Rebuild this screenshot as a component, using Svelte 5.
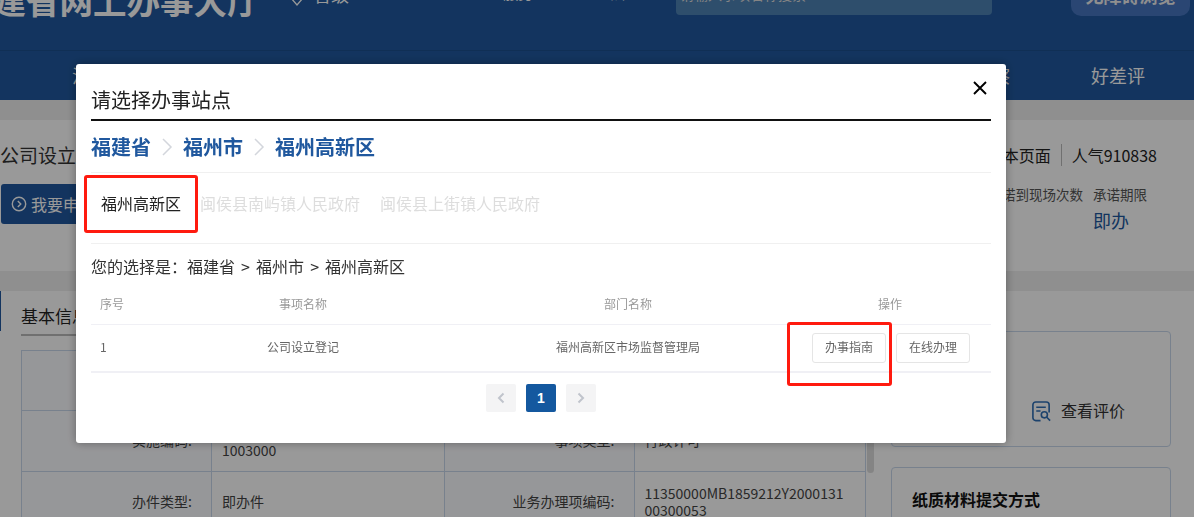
<script>
	const tabs = ["福州高新区", "闽侯县南屿镇人民政府", "闽侯县上街镇人民政府"];
	const crumbs = ["福建省", "福州市", "福州高新区"];
	const navItems = ["法律法规", "办事指南", "结果公示", "咨询投诉", "便民服务", "监督考察"];
</script>

<div class="page">
	<header class="top">
		<h1>福建省网上办事大厅</h1>
		<div class="region">
			<svg width="14" height="14" viewBox="0 0 14 14"><path d="M1 6l6 7 6-7" fill="none" stroke="currentColor" stroke-width="1.3" /></svg>
			<span>省级</span>
		</div>
		<span class="link first">个人 服务</span>
		<span class="link second">法人</span>
		<div class="search"><span>请输入事项名称搜索</span></div>
		<div class="access"><span>无障碍浏览</span></div>
	</header>

	<nav class="nav">
		<div class="nav-main">
			{#each navItems as item}
				<span>{item}</span>
			{/each}
		</div>
		<span>好差评</span>
	</nav>

	<div class="band"></div>

	<section class="summary">
		<div class="left">
			<div class="name">公司设立登记</div>
			<div class="apply">
				<svg width="16" height="16" viewBox="0 0 16 16"><circle cx="8" cy="8" r="6.7" fill="none" stroke="currentColor" stroke-width="1.4" /><path d="M6.8 5l3 3-3 3" fill="none" stroke="currentColor" stroke-width="1.4" /></svg>
				我要申请
			</div>
		</div>
		<div class="right">
			<div class="stats">
				<span>收藏本页面</span>
				<i></i>
				<span>人气910838</span>
			</div>
			<div class="limits">
				<div><small>承诺到现场次数</small></div>
				<div>
					<small>承诺期限</small>
					<b>即办</b>
				</div>
			</div>
		</div>
	</section>

	<div class="band"></div>

	<section class="detail">
		<div class="main">
			<div class="main-title"><span>基本信息</span></div>
			<div class="grid">
				<div class="label"></div>
				<div class="value"></div>
				<div class="label"></div>
				<div class="value"></div>

				<div class="label">实施编码:</div>
				<div class="value wide">11350000MB1859212Y200013<br />1003000</div>
				<div class="label">事项类型:</div>
				<div class="value wide">行政许可</div>

				<div class="label">办件类型:</div>
				<div class="value">即办件</div>
				<div class="label">业务办理项编码:</div>
				<div class="value">11350000MB1859212Y2000131<br />00300053</div>
			</div>
		</div>
		<div class="scrollbar"></div>
		<aside>
			<div class="card review">
				<svg width="21" height="21" viewBox="0 0 22 22" fill="none" stroke="#2f6fb5" stroke-width="1.7">
					<path d="M10 20.5H5a3 3 0 0 1-3-3V4a3 3 0 0 1 3-3h11a3 3 0 0 1 3 3v8" />
					<path d="M5.5 6.5h10M5.5 10.5h4.5" />
					<circle cx="14" cy="14.5" r="3.2" />
					<path d="M16.5 17l3.5 3.5" />
				</svg>
				<span>查看评价</span>
			</div>
			<div class="card paper">纸质材料提交方式</div>
		</aside>
	</section>
</div>

<div class="mask"></div>

<div class="modal">
	<button class="close" aria-label="关闭">
		<svg width="14" height="14" viewBox="0 0 14 14"><path d="M1 1l12 12M13 1L1 13" stroke="#000" stroke-width="1.9" /></svg>
	</button>
	<h2>请选择办事站点</h2>
	<div class="crumbs">
		{#each crumbs as crumb, i}
			{#if i > 0}
				<svg width="12" height="18" viewBox="0 0 12 18"><path d="M2 1l8 8-8 8" fill="none" stroke="#d3d6dc" stroke-width="1.5" /></svg>
			{/if}
			<span>{crumb}</span>
		{/each}
	</div>
	<div class="tabs">
		{#each tabs as tab, i}
			<span class:active={i === 0}>{tab}</span>
		{/each}
	</div>
	<div class="choice">您的选择是：福建省 &gt; 福州市 &gt; 福州高新区</div>
	<div class="table">
		<div class="row head">
			<div class="no">序号</div>
			<div>事项名称</div>
			<div>部门名称</div>
			<div>操作</div>
		</div>
		<div class="row body">
			<div class="no">1</div>
			<div>公司设立登记</div>
			<div>福州高新区市场监督管理局</div>
			<div class="ops">
				<button>办事指南</button>
				<button>在线办理</button>
			</div>
		</div>
	</div>
	<div class="pager">
		<span class="pg">
			<svg width="8" height="12" viewBox="0 0 8 12"><path d="M6.5 1.5L2 6l4.5 4.5" fill="none" stroke="#c0c4cc" stroke-width="2" /></svg>
		</span>
		<span class="pg on">1</span>
		<span class="pg">
			<svg width="8" height="12" viewBox="0 0 8 12"><path d="M1.5 1.5L6 6l-4.5 4.5" fill="none" stroke="#c0c4cc" stroke-width="2" /></svg>
		</span>
	</div>
</div>

<div class="mark mark-tab"></div>
<div class="mark mark-btn"></div>

<style>
	:global(body) {
		margin: 0;
		overflow: hidden;
		height: 517px;
		font-family: "Noto Sans CJK SC", "Noto Sans", sans-serif;
		background: #fff;
	}

	.page {
		width: 1194px;
		height: 517px;
		overflow: hidden;
		color: #333;
	}

	/* page is scrolled, only the bottom of the top bar shows */
	.top {
		height: 50px;
		background: #20589e;
		border-bottom: 1px solid #1c4f8e;
		display: flex;
		align-items: flex-start;
		color: #fff;
		overflow: hidden;
	}

	h1 {
		margin: -20px 0 0 -41px;
		width: 331px;
		font-size: 33.5px;
		line-height: 40px;
		font-weight: 700;
		white-space: nowrap;
		flex: none;
	}

	.region {
		display: flex;
		align-items: center;
		gap: 9px;
		font-size: 18px;
		line-height: 24px;
		margin-top: -18px;
		width: 180px;
		flex: none;
	}

	.region svg {
		margin-top: 9px;
	}

	.link {
		font-size: 15px;
		line-height: 20px;
		margin-top: -17px;
		flex: none;
	}

	.first {
		width: 140px;
	}

	.second {
		width: 66px;
		overflow: hidden;
	}

	.search {
		width: 316px;
		height: 15px;
		background: #4e82b4;
		border-radius: 0 0 4px 4px;
		font-size: 14px;
		line-height: 14px;
		padding-left: 4px;
		box-sizing: border-box;
		flex: none;
		overflow: hidden;
		color: #ddd;
	}

	.search span {
		display: block;
		margin-top: -13px;
	}

	.access {
		margin-left: 79px;
		width: 119px;
		height: 16px;
		background: #4675c0;
		border-radius: 0 0 10px 10px;
		font-size: 18px;
		font-weight: 700;
		line-height: 18px;
		text-align: center;
		flex: none;
		overflow: hidden;
		color: #eee;
	}

	.access span {
		display: block;
		margin-top: -14px;
	}

	.nav {
		height: 49px;
		background: #20589e;
		display: flex;
		align-items: center;
		gap: 81px;
		padding: 0 49px 2px 72px;
		box-sizing: border-box;
		color: #fff;
		font-size: 18px;
		white-space: nowrap;
	}

	.nav-main {
		flex: 1;
		display: flex;
		justify-content: space-between;
	}

	.band {
		height: 20px;
		background: #eee;
	}

	.summary {
		height: 151px;
		width: 1191px;
		display: flex;
		justify-content: space-between;
		box-sizing: border-box;
		padding-top: 22px;
	}

	.name {
		font-size: 19px;
		line-height: 26px;
	}

	.apply {
		margin-top: 16px;
		margin-left: 1px;
		width: 110px;
		height: 40px;
		background: #20589e;
		border-radius: 3px;
		color: #fff;
		font-size: 16px;
		display: flex;
		align-items: center;
		gap: 4px;
		padding-left: 10px;
		box-sizing: border-box;
	}

	.right {
		padding-right: 34px;
		display: flex;
		flex-direction: column;
		align-items: flex-end;
	}

	.stats {
		display: flex;
		align-items: center;
		font-size: 16px;
		line-height: 26px;
		color: #222;
	}

	.stats i {
		width: 1px;
		height: 22px;
		background: #bbb;
		margin: 0 10px;
	}

	.limits {
		display: flex;
		gap: 10px;
		margin-top: 15px;
		margin-right: 10px;
	}

	.limits small {
		font-size: 13.5px;
		line-height: 22px;
		color: #555;
		display: block;
	}

	.limits b {
		font-weight: 400;
		font-size: 18px;
		line-height: 30px;
		color: #20589e;
		display: block;
	}

	.detail {
		height: 226px;
		display: flex;
		position: relative;
	}

	.detail::before {
		content: "";
		position: absolute;
		left: 0;
		top: 0;
		width: 1px;
		height: 40px;
		background: #20589e;
	}

	.main {
		width: 845px;
		padding-left: 21px;
		flex: none;
	}

	.main-title {
		height: 43px;
		border-bottom: 2px solid #bbb;
		display: flex;
		align-items: flex-end;
		font-size: 17px;
		line-height: 34px;
		color: #222;
	}

	.main-title span {
		padding-bottom: 1px;
	}

	.grid {
		margin-top: 14px;
		display: grid;
		grid-template-columns: 190px 232.5px 190px 1fr;
		grid-template-rows: 60px 61px 61px;
		border-top: 1px solid #c8d8ec;
		border-left: 1px solid #c8d8ec;
		font-size: 14px;
		line-height: 17.5px;
	}

	.label,
	.value {
		border-right: 1px solid #c8d8ec;
		border-bottom: 1px solid #c8d8ec;
		display: flex;
		align-items: center;
		box-sizing: border-box;
		color: #444;
	}

	.label {
		justify-content: flex-end;
		padding-right: 19px;
		background: #fbfcff;
	}

	.value {
		padding-left: 10px;
	}

	.value.wide {
		line-height: 20px;
		padding-bottom: 2px;
	}

	.scrollbar {
		width: 7px;
		height: 182px;
		margin-left: 1px;
		background: #ddd;
		border-radius: 0 0 4px 4px;
		flex: none;
	}

	aside {
		margin-left: 17px;
		width: 280px;
		flex: none;
		padding-top: 40px;
		display: flex;
		flex-direction: column;
		gap: 20px;
	}

	.card {
		border: 1px solid #c8d8ec;
		border-radius: 4px;
		box-sizing: border-box;
		flex: none;
	}

	.review {
		height: 116px;
		display: flex;
		align-items: flex-end;
		gap: 9px;
		padding: 0 0 24px 139px;
		font-size: 16px;
		line-height: 24px;
	}

	.paper {
		height: 120px;
		padding: 19px 20px;
		font-size: 16px;
		line-height: 24px;
		font-weight: 700;
		color: #111;
	}

	.mask {
		position: fixed;
		inset: 0;
		background: rgba(0, 0, 0, 0.4);
	}

	.modal {
		position: fixed;
		left: 76px;
		top: 64px;
		width: 930px;
		height: 379px;
		background: #fff;
		border-radius: 3px;
		box-shadow: 0 0 10px rgba(0, 0, 0, 0.35);
		padding: 0 15px;
		box-sizing: border-box;
		color: #333;
	}

	.close {
		position: absolute;
		right: 19px;
		top: 17px;
		width: 14px;
		height: 14px;
		padding: 0;
		border: 0;
		background: none;
		line-height: 0;
	}

	h2 {
		margin: 0;
		height: 57px;
		box-sizing: border-box;
		border-bottom: 2px solid #111;
		font-size: 20px;
		font-weight: 400;
		line-height: 28px;
		padding-top: 22px;
		color: #222;
	}

	.crumbs {
		height: 52px;
		border-bottom: 1px solid #f0f0f0;
		box-sizing: border-box;
		display: flex;
		align-items: center;
		gap: 10px;
		font-size: 20px;
		font-weight: 700;
		color: #20589e;
	}

	.tabs {
		height: 71px;
		border-bottom: 1px solid #f0f0f0;
		box-sizing: border-box;
		display: flex;
		align-items: center;
		gap: 20px;
		padding: 0 0 10px 10px;
		font-size: 16px;
		color: #ddd;
	}

	.tabs .active {
		color: #222;
		margin-right: -1px;
	}

	.choice {
		height: 47px;
		font-size: 16px;
		line-height: 45px;
		color: #333;
		word-spacing: 2.5px;
		white-space: nowrap;
	}

	.row {
		display: grid;
		grid-template-columns: 48px 328px 322px 202px;
		font-size: 12px;
		text-align: center;
		align-items: center;
	}

	.row .no {
		text-align: left;
		padding-left: 9px;
	}

	.head {
		height: 25px;
		padding-bottom: 8px;
		color: #999;
		border-bottom: 1px solid #f0f0f5;
	}

	.body {
		height: 46px;
		color: #666;
		border-bottom: 2px solid #f0f0f5;
	}

	.body > div:not(.ops) {
		padding-bottom: 3px;
	}

	.ops {
		display: flex;
		justify-content: center;
		gap: 10px;
		padding-left: 2px;
	}

	.ops button {
		height: 30px;
		width: 74px;
		padding: 0 0 3px;
		background: #fff;
		border: 1px solid #e5e5e5;
		border-radius: 3px;
		font-family: inherit;
		font-size: 12px;
		color: #666;
	}

	.pager {
		display: flex;
		justify-content: center;
		gap: 10px;
		margin-top: 11px;
	}

	.pg {
		width: 30px;
		height: 28px;
		display: flex;
		align-items: center;
		justify-content: center;
		background: #f4f4f5;
		border-radius: 2px;
	}

	.pg.on {
		background: #14589f;
		color: #fff;
		font-size: 14px;
		font-weight: 700;
		font-family: "Liberation Sans", sans-serif;
	}

	/* red annotation boxes on top of the screenshot */
	.mark {
		position: fixed;
		border: 3px solid #ff1a0f;
		border-radius: 3px;
		box-sizing: border-box;
	}

	.mark-tab {
		left: 84px;
		top: 175px;
		width: 114px;
		height: 58px;
	}

	.mark-btn {
		left: 787px;
		top: 322px;
		width: 105px;
		height: 64px;
	}
</style>
